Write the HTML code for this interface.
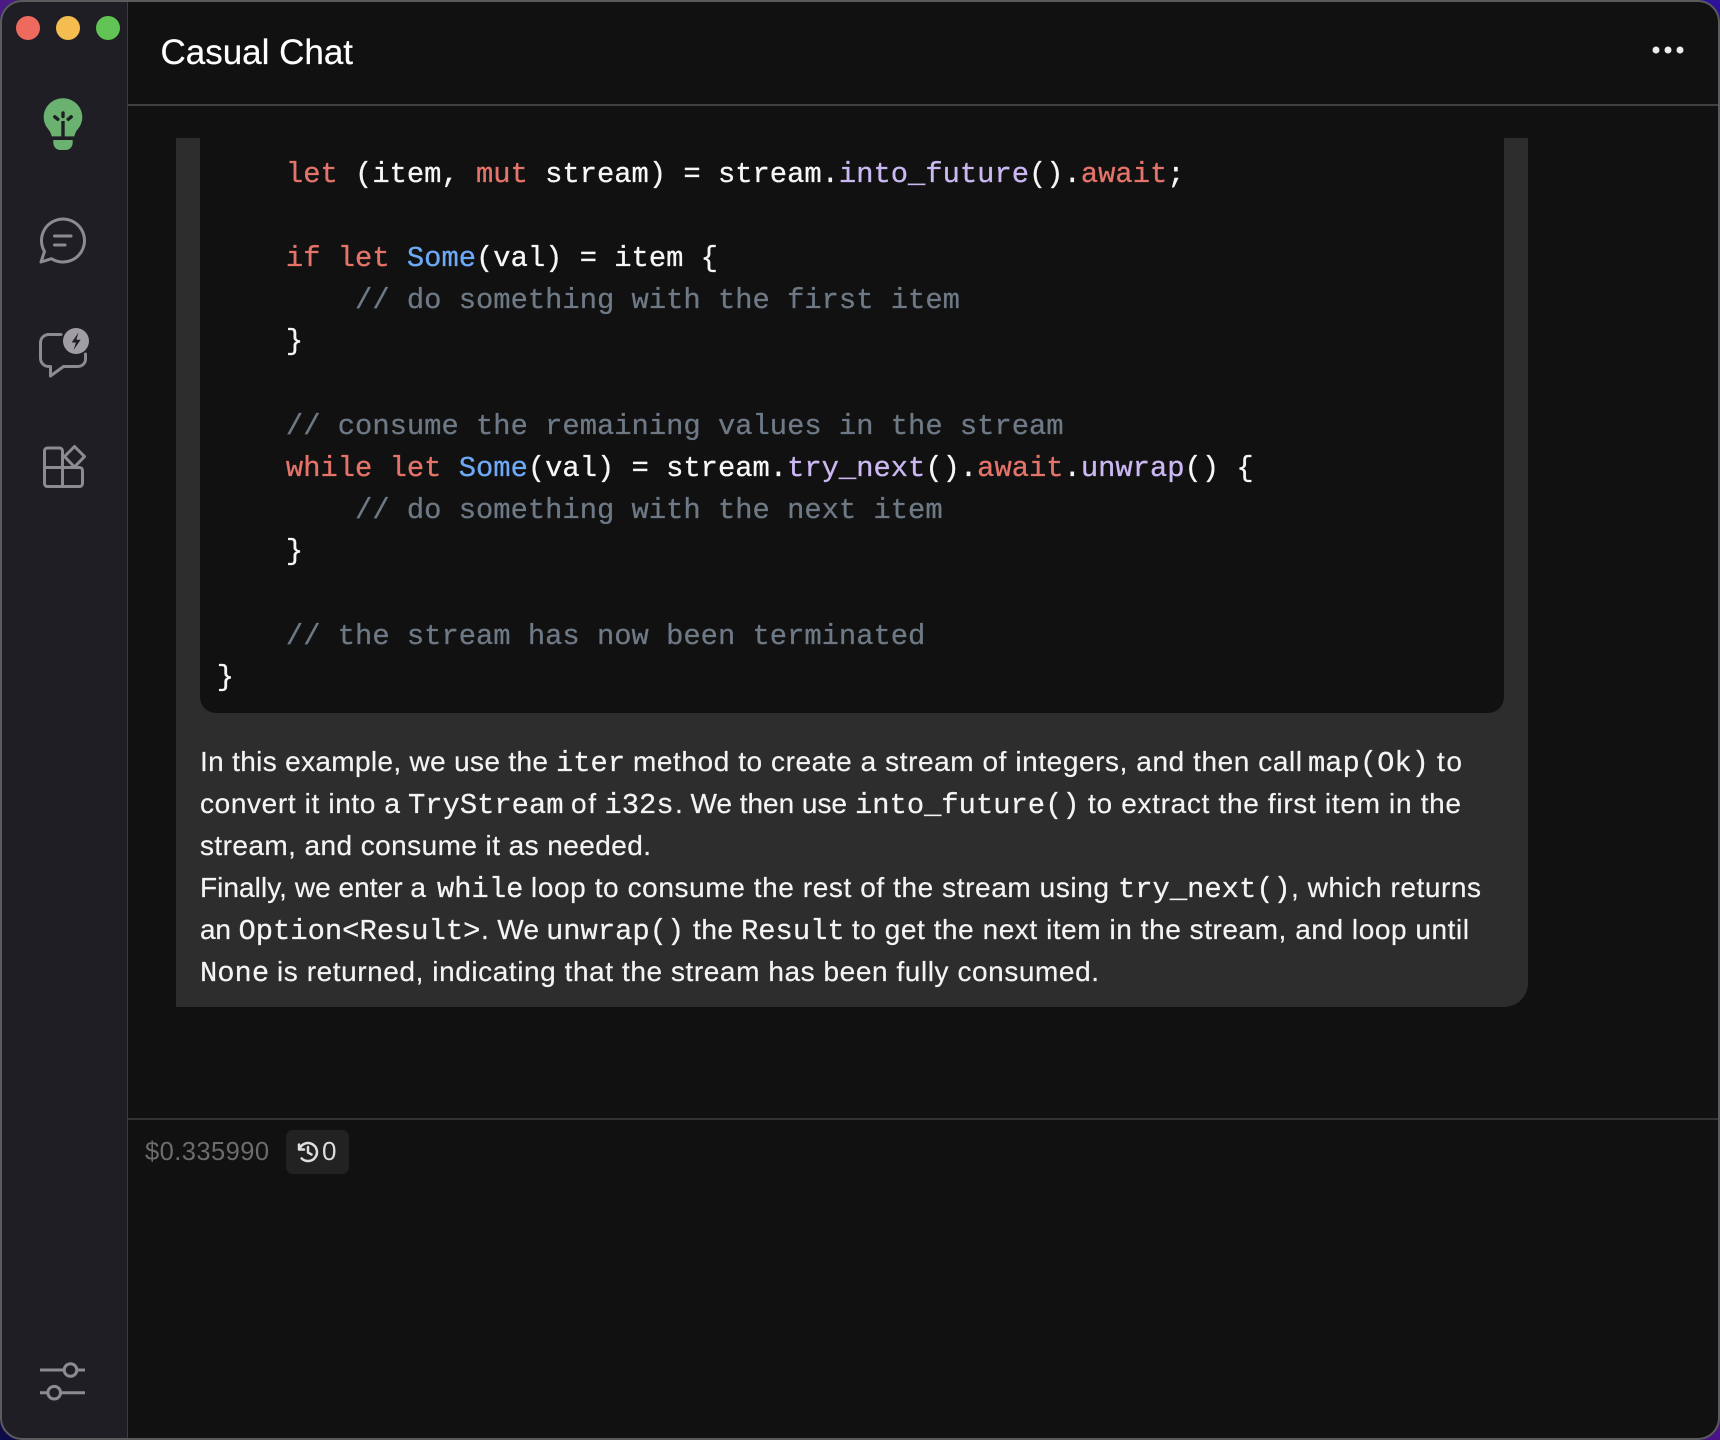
<!DOCTYPE html>
<html lang="en">
<head>
<meta charset="utf-8">
<title>Casual Chat</title>
<style>
html,body{margin:0;padding:0;width:1720px;height:1440px;overflow:hidden;background:#111}
svg{position:absolute;left:0;top:0;display:block}
text{white-space:pre}
.s{font-family:"Liberation Sans",sans-serif;font-size:28px;fill:#f4f4f4;stroke:#f4f4f4;stroke-width:.2px}
.m{font-family:"Liberation Mono",monospace;font-size:28.8px;fill:#f4f4f4;stroke:#f4f4f4;stroke-width:.25px}
.c{font-family:"Liberation Mono",monospace;font-size:28.8px;fill:#f6f6f6;stroke:#f6f6f6;stroke-width:.3px}
.k{fill:#e4736a;stroke:#e4736a;stroke-width:.3px}
.b{fill:#6ea9f7;stroke:#6ea9f7;stroke-width:.3px}
.p{fill:#cbb8f2;stroke:#cbb8f2;stroke-width:.3px}
.g{fill:#6e7986;stroke:#6e7986;stroke-width:.3px}
</style>
</head>
<body>
<svg width="1720" height="1440" viewBox="0 0 1720 1440" xmlns="http://www.w3.org/2000/svg">
<defs>
<clipPath id="win"><rect x="0" y="0" width="1720" height="1440" rx="22"/></clipPath>
</defs>
<!-- wallpaper corners -->
<rect x="0" y="0" width="40" height="40" fill="#4c1a86"/>
<rect x="1680" y="0" width="40" height="40" fill="#2d129a"/>
<rect x="0" y="1400" width="40" height="40" fill="#0e0a4a"/>
<rect x="1680" y="1400" width="40" height="40" fill="#4a1488"/>

<g clip-path="url(#win)">
<rect x="0" y="0" width="1720" height="1440" fill="#111111"/>
<rect x="0" y="0" width="127" height="1440" fill="#201e25"/>
<rect x="127" y="0" width="1" height="1440" fill="#3c3b3f"/>
<rect x="128" y="104" width="1592" height="2" fill="#3f3f3f"/>
<rect x="128" y="1118" width="1592" height="2" fill="#333333"/>

<!-- bubble -->
<path d="M176 138H1528V983a24 24 0 0 1-24 24H176Z" fill="#2d2d2d"/>
<path d="M200 138H1504V697a16 16 0 0 1-16 16H216a16 16 0 0 1-16-16Z" fill="#111111"/>
</g>

<!-- traffic lights -->
<circle cx="28" cy="28" r="12" fill="#ee6a5f"/>
<circle cx="68" cy="28" r="12" fill="#f5bd4f"/>
<circle cx="108" cy="28" r="12" fill="#61c454"/>

<!-- bulb icon -->
<path d="M63 98.300c-10.600 0-19.300 8.400-19.300 18.900 0 5 2.200 9.300 4.800 12.300 1.700 2 2.700 4.600 3.200 6.900h22.600c.5-2.300 1.500-4.900 3.200-6.900 2.600-3 4.800-7.300 4.800-12.300 0-10.500-8.700-18.900-19.300-18.900Z" fill="#6bb16f"/>
<path d="M53.300 140h19.400v2.500c0 4.300-3 7.500-7 7.500h-5.400c-4 0-7-3.200-7-7.500Z" fill="#6bb16f"/>
<g stroke="#201e25" stroke-width="3.400" stroke-linecap="round" fill="none">
<path d="M63 121v16" stroke-linecap="butt"/>
<path d="M63 113v3.500"/>
<path d="M54.800 116.800l3 2.500"/>
<path d="M71.200 116.800l-3 2.500"/>
</g>

<!-- chat icon -->
<g fill="none" stroke="#8d8b91" stroke-width="3" stroke-linecap="round" stroke-linejoin="round">
<path d="M44.500 251.500A21.500 21.500 0 1 1 51.500 258.700L41 262Z"/>
<path d="M54.500 236h16.500"/>
<path d="M54.500 245h10.500"/>
</g>

<!-- chat bolt icon -->
<g fill="none" stroke="#8d8b91" stroke-width="3" stroke-linecap="round" stroke-linejoin="round">
<path d="M61 334.500H49c-5 0-8.500 3.500-8.500 8.500v15c0 5 3.500 8.500 8.500 8.500h1.500v9.500l13-9.500h14c4.500 0 8-3 8-7.500v-5"/>
</g>
<circle cx="76" cy="341" r="13" fill="#a09ea4"/>
<path d="M78.500 332.500l-6.800 10h4.200l-2.300 7.500 7-10.300h-4.300l2.200-7.200Z" fill="#201e25"/>

<!-- grid icon -->
<g fill="none" stroke="#8d8b91" stroke-width="3" stroke-linejoin="round" stroke-linecap="round">
<path d="M62.500 467.500H44.500V451c0-1.700 1.300-3 3-3h12c1.700 0 3 1.300 3 3Z"/>
<path d="M62.500 467.500v19H47.500c-1.700 0-3-1.300-3-3v-16"/>
<path d="M62.500 467.500H79.500c1.700 0 3 1.300 3 3v13c0 1.700-1.300 3-3 3H62.500"/>
<path d="M74.500 446.500L84.500 456.500L74.500 467L64.500 456.500Z" fill="#201e25"/>
</g>

<!-- sliders icon -->
<g fill="none" stroke="#8d8b91" stroke-width="3">
<path d="M40 1370h24M77 1370H85"/>
<circle cx="70.500" cy="1370" r="6.300"/>
<path d="M40 1392.700h7.500M60.500 1392.700H85"/>
<circle cx="54.200" cy="1392.700" r="6.300"/>
</g>

<!-- header -->
<text x="160.500" y="64" class="s" style="font-size:35px;fill:#fff" textLength="192.500">Casual Chat</text>
<circle cx="1656" cy="50" r="3.500" fill="#eeeeee"/>
<circle cx="1668" cy="50" r="3.500" fill="#eeeeee"/>
<circle cx="1680" cy="50" r="3.500" fill="#eeeeee"/>

<!-- code -->
<text class="c" x="216.800" y="182">    <tspan class="k">let</tspan> (item, <tspan class="k">mut</tspan> stream) = stream.<tspan class="p">into_future</tspan>().<tspan class="k">await</tspan>;</text>
<text class="c" x="216.800" y="266">    <tspan class="k">if</tspan> <tspan class="k">let</tspan> <tspan class="b">Some</tspan>(val) = item {</text>
<text class="c g" x="216.800" y="308">        // do something with the first item</text>
<text class="c" x="216.800" y="349">    }</text>
<text class="c g" x="216.800" y="434">    // consume the remaining values in the stream</text>
<text class="c" x="216.800" y="476">    <tspan class="k">while</tspan> <tspan class="k">let</tspan> <tspan class="b">Some</tspan>(val) = stream.<tspan class="p">try_next</tspan>().<tspan class="k">await</tspan>.<tspan class="p">unwrap</tspan>() {</text>
<text class="c g" x="216.800" y="518">        // do something with the next item</text>
<text class="c" x="216.800" y="559">    }</text>
<text class="c g" x="216.800" y="644">    // the stream has now been terminated</text>
<text class="c" x="216.800" y="685">}</text>

<!-- paragraph -->
<text class="s" x="200" y="771" textLength="348">In this example, we use the</text>
<text class="m" x="556" y="771">iter</text>
<text class="s" x="633" y="771" textLength="669">method to create a stream of integers, and then call</text>
<text class="m" x="1308" y="771">map(Ok)</text>
<text class="s" x="1437" y="771" textLength="25">to</text>

<text class="s" x="200" y="813" textLength="200">convert it into a</text>
<text class="m" x="408" y="813">TryStream</text>
<text class="s" x="571" y="813" textLength="25">of</text>
<text class="m" x="604.500" y="813">i32s</text>
<text class="s" x="675" y="813" textLength="172">. We then use</text>
<text class="m" x="855" y="813">into_future()</text>
<text class="s" x="1088" y="813" textLength="373">to extract the first item in the</text>

<text class="s" x="200" y="855" textLength="451">stream, and consume it as needed.</text>

<text class="s" x="200" y="897" textLength="226">Finally, we enter a</text>
<text class="m" x="437" y="897">while</text>
<text class="s" x="531" y="897" textLength="578">loop to consume the rest of the stream using</text>
<text class="m" x="1118" y="897">try_next()</text>
<text class="s" x="1291" y="897" textLength="190">, which returns</text>

<text class="s" x="200" y="939" textLength="31">an</text>
<text class="m" x="238.500" y="939">Option&lt;Result&gt;</text>
<text class="s" x="481" y="939" textLength="58">. We</text>
<text class="m" x="546" y="939">unwrap()</text>
<text class="s" x="693" y="939" textLength="40">the</text>
<text class="m" x="741" y="939">Result</text>
<text class="s" x="852" y="939" textLength="617">to get the next item in the stream, and loop until</text>

<text class="m" x="200" y="981">None</text>
<text class="s" x="277" y="981" textLength="822">is returned, indicating that the stream has been fully consumed.</text>

<!-- footer -->
<text class="s" x="145" y="1160" style="font-size:25.500px;fill:#6c6c6c;stroke:none" textLength="124">$0.335990</text>
<rect x="286" y="1130" width="63" height="44" rx="7" fill="#222222"/>
<g fill="none" stroke="#dedede" stroke-width="2.500" stroke-linecap="round" stroke-linejoin="round">
<path d="M299.500 1149A9 9 0 1 1 301.700 1158.500"/>
<path d="M299 1144.500v5h5"/>
<path d="M308 1147v5.500l3.500 2"/>
</g>
<text class="s" x="322" y="1160" style="font-size:26px;fill:#dedede;stroke:none">0</text>

<!-- window border -->
<rect x="1" y="1" width="1718" height="1438" rx="21" fill="none" stroke="#5c5c5e" stroke-width="2"/>
</svg>
</body>
</html>
